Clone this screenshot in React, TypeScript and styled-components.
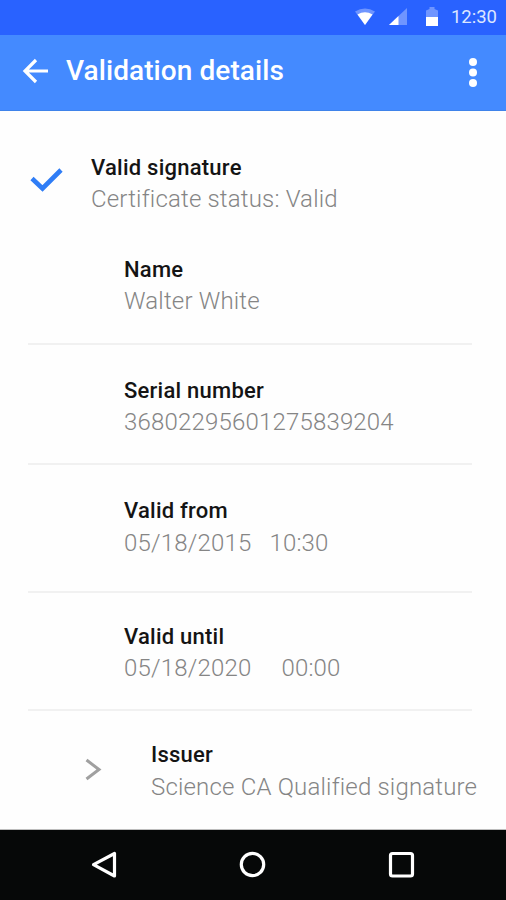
import React from "react";
import styled, { createGlobalStyle } from "styled-components";

const GlobalStyle = createGlobalStyle`
  * { box-sizing: border-box; }
  body { margin: 0; background: #fefefe; }
`;

const Screen = styled.div`
  width: 506px;
  height: 900px;
  display: flex;
  flex-direction: column;
  overflow: hidden;
  background: #fefefe;
  font-family: Roboto, "Liberation Sans", sans-serif;
`;

const StatusBar = styled.div`
  height: 35px;
  flex: none;
  display: flex;
  align-items: center;
  justify-content: flex-end;
  padding: 0 9px 1px 0;
  background: #2962ff;
`;

const Clock = styled.span`
  margin-left: 12px;
  font-size: 18.5px;
  line-height: 34px;
  color: #dce6ff;
`;

const WifiIcon = styled.svg`
  margin-right: 14px;
`;
const SignalIcon = styled.svg`
  margin-right: 18px;
`;

const AppBar = styled.header`
  height: 76px;
  flex: none;
  display: flex;
  align-items: center;
  padding: 0 26px 4px 22px;
  background: #448aff;
  border-bottom: 1px solid #3f83ea;
`;

const Title = styled.h1`
  margin: 0 auto 0 17px;
  font-size: 28px;
  line-height: 36px;
  font-weight: 500;
  letter-spacing: 0.08px;
  color: #fff;
`;

const Content = styled.main`
  flex: 1;
  display: flex;
  flex-direction: column;
  border-bottom: 1px solid #bdbdbd;
`;

const Row = styled.section<{ $height: number; $top: number; $indent: number }>`
  height: ${(p) => p.$height}px;
  flex: none;
  display: flex;
  align-items: flex-start;
  margin: 0 0 0 28px;
  padding: ${(p) => p.$top}px 0 0 ${(p) => p.$indent}px;
`;

const Divider = styled.hr`
  width: 444px;
  height: 2px;
  flex: none;
  margin: 0 0 0 28px;
  border: 0;
  background: #f1f1f1;
`;

const RowText = styled.div`
  white-space: pre;
`;

const Label = styled.div`
  font-size: 22px;
  line-height: 32px;
  font-weight: 500;
  letter-spacing: 0.24px;
  color: #141414;
`;

const Value = styled.div<{ $lead?: number }>`
  display: flex;
  font-size: 24px;
  line-height: ${(p) => p.$lead ?? 31}px;
  font-weight: 300;
  letter-spacing: 0.18px;
  color: #858585;
`;

const Time = styled.span<{ $gap: number }>`
  margin-left: ${(p) => p.$gap}px;
`;

const CheckIcon = styled.svg`
  margin: 15px 28px 0 0;
`;
const ChevronIcon = styled.svg`
  margin: 18px 49px 0 0;
`;

const NavBar = styled.nav`
  height: 70px;
  flex: none;
  display: flex;
  align-items: center;
  justify-content: space-between;
  padding: 0 90px;
  background: #060808;
`;

export default function App() {
  return (
    <Screen>
      <GlobalStyle />
      <StatusBar>
        <WifiIcon width="20" height="18" viewBox="0 0 20 18">
          <path d="M0 3.500Q10-2.500 20 3.500L10 17Z" fill="#6f95ff" />
          <path d="M2.500 6.500Q10 2 17.500 6.500L10 17Z" fill="#fff" />
        </WifiIcon>
        <SignalIcon width="18" height="18" viewBox="0 0 18 18">
          <path d="M18 0V17H0Z" fill="#6f95ff" />
          <path d="M9.500 8V17H0Z" fill="#fff" />
        </SignalIcon>
        <svg width="14" height="20" viewBox="0 0 14 20">
          <path d="M1 3.500L4.500 2V0H9.500V2L13 3.500V11H1Z" fill="#6f95ff" />
          <path d="M1 10H13V19H1Z" fill="#fff" />
        </svg>
        <Clock>12:30</Clock>
      </StatusBar>
      <AppBar>
        <svg width="27" height="26" viewBox="0 0 27 26" fill="none" stroke="#fff" strokeWidth="3.200">
          <path d="M26 13H3M14 2L3 13L14 24" />
        </svg>
        <Title>Validation details</Title>
        <svg width="14" height="32" viewBox="0 0 14 32" fill="#fff">
          <circle cx="7" cy="7" r="4" />
          <circle cx="7" cy="17.500" r="4" />
          <circle cx="7" cy="28" r="4" />
        </svg>
      </AppBar>
      <Content>
        <Row $height={102} $top={41} $indent={2}>
          <CheckIcon width="33" height="26" viewBox="0 0 33 26" fill="none" stroke="#2f7df6" strokeWidth="4.600">
            <path d="M2 11.500L12.500 21.500L31 3" />
          </CheckIcon>
          <RowText>
            <Label>Valid signature</Label>
            <Value>Certificate status: Valid</Value>
          </RowText>
        </Row>
        <Row $height={130} $top={41} $indent={96}>
          <RowText>
            <Label>Name</Label>
            <Value>Walter White</Value>
          </RowText>
        </Row>
        <Divider />
        <Row $height={118} $top={30} $indent={96}>
          <RowText>
            <Label>Serial number</Label>
            <Value>36802295601275839204</Value>
          </RowText>
        </Row>
        <Divider />
        <Row $height={126} $top={30} $indent={96}>
          <RowText>
            <Label>Valid from</Label>
            <Value $lead={33}>05/18/2015<Time $gap={18}>10:30</Time></Value>
          </RowText>
        </Row>
        <Divider />
        <Row $height={116} $top={28} $indent={96}>
          <RowText>
            <Label>Valid until</Label>
            <Value>05/18/2020<Time $gap={30}>00:00</Time></Value>
          </RowText>
        </Row>
        <Divider />
        <Row $height={118} $top={28} $indent={56}>
          <ChevronIcon width="18" height="24" viewBox="0 0 18 24" fill="none" stroke="#a0a0a0" strokeWidth="3">
            <path d="M2.500 3L15 12.500L2.500 22" />
          </ChevronIcon>
          <RowText>
            <Label>Issuer</Label>
            <Value $lead={33}>Science CA Qualified signature</Value>
          </RowText>
        </Row>
      </Content>
      <NavBar>
        <svg width="28" height="30" viewBox="0 0 28 30" fill="none" stroke="#fff" strokeWidth="3.200" strokeLinejoin="round">
          <path d="M24.500 3.500V26L3.500 14.700Z" />
        </svg>
        <svg width="28" height="30" viewBox="0 0 28 30" fill="none" stroke="#fff" strokeWidth="3.200">
          <circle cx="13.500" cy="14.500" r="11.200" />
        </svg>
        <svg width="28" height="30" viewBox="0 0 28 30" fill="none" stroke="#fff" strokeWidth="3.200">
          <rect x="2.500" y="3.500" width="22" height="22.500" rx="2" />
        </svg>
      </NavBar>
    </Screen>
  );
}
